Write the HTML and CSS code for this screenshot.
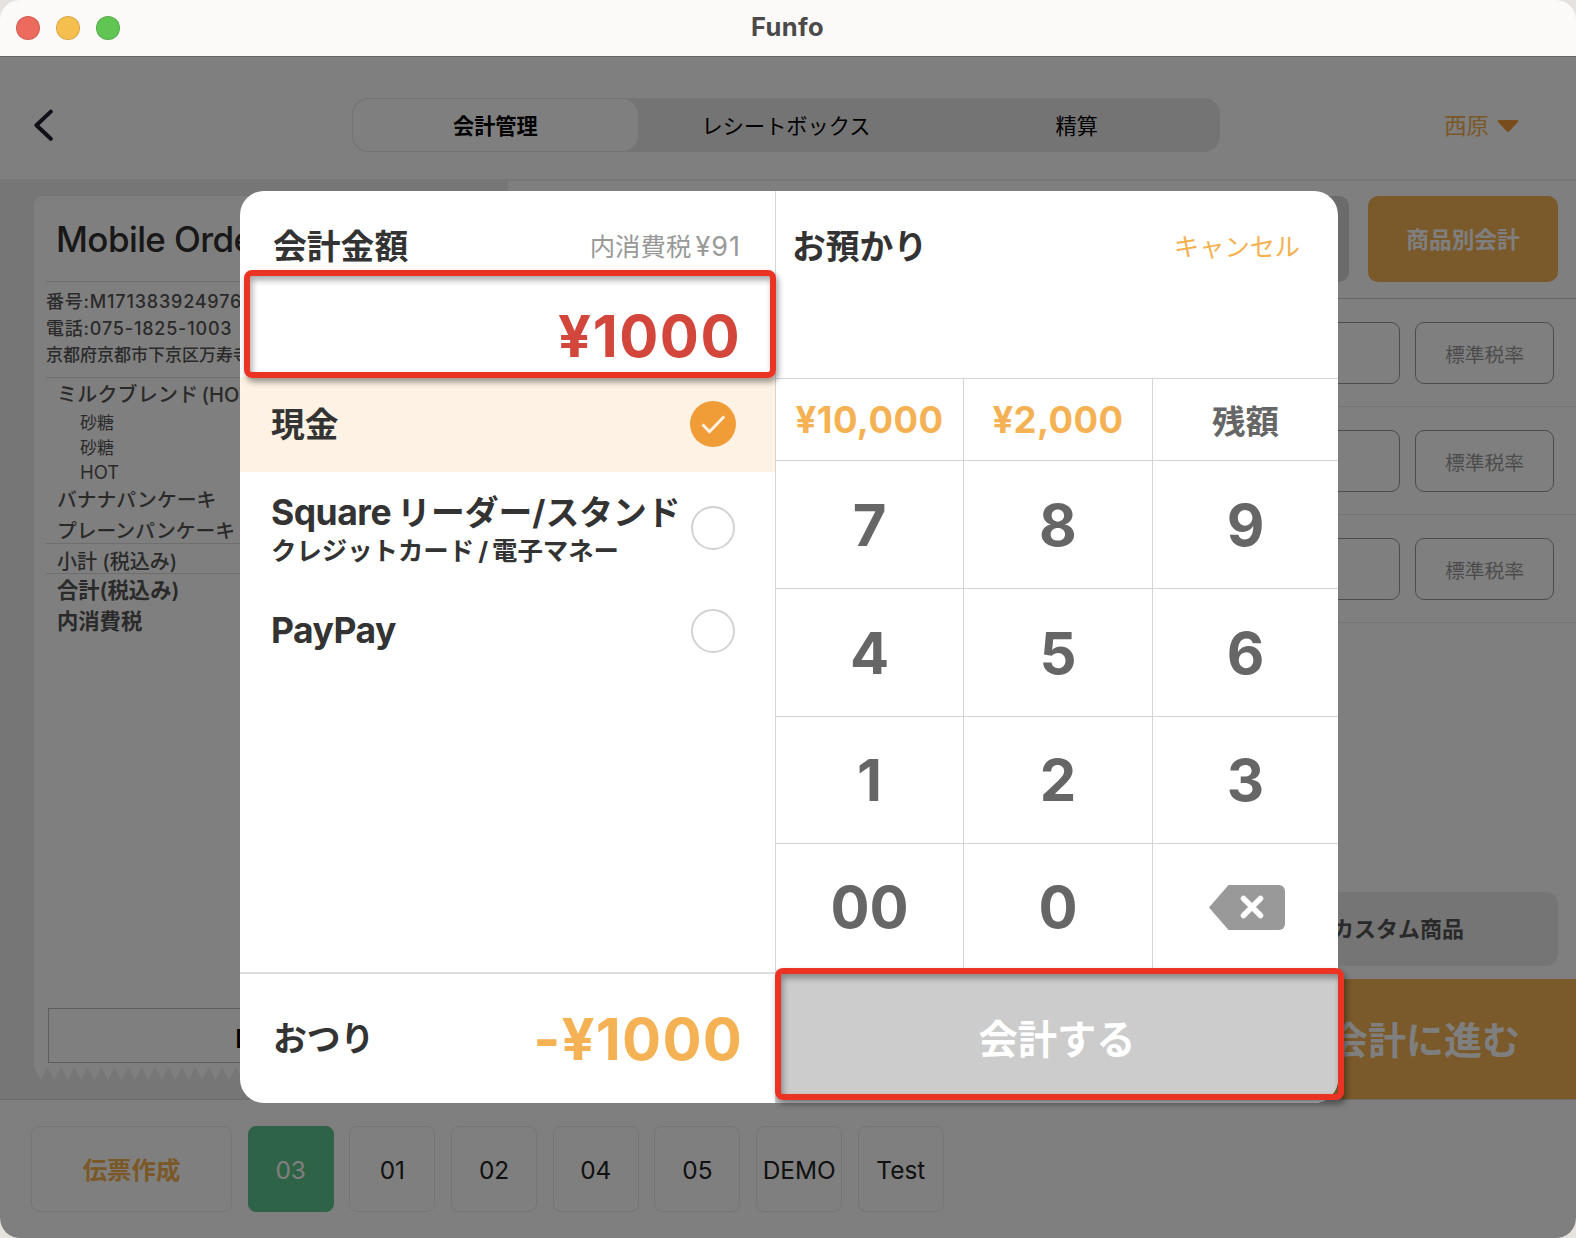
FILE: index.html
```html
<!DOCTYPE html>
<html lang="ja">
<head>
    <meta charset="UTF-8">
    <meta name="viewport" content="width=device-width, initial-scale=1.0">
    <title>Funfo</title>
    <link rel="stylesheet" href="styles.css">
</head>
<body>
    <div class="window">
        <div class="titlebar">
            <div class="lights">
                <span class="light red"></span>
                <span class="light yellow"></span>
                <span class="light green"></span>
            </div>
            <h1>Funfo</h1>
        </div>

        <div class="app">
            <header class="topbar">
                <svg class="back" width="20" height="34" viewBox="0 0 20 34">
                    <path d="M16.800 3.600 2.400 17.200l14.400 13.600" fill="none" stroke="#202030" stroke-width="4" stroke-linecap="round" stroke-linejoin="round"/>
                </svg>
                <nav class="tabs">
                    <a class="tab active">会計管理</a>
                    <a class="tab tab-receipt">レシートボックス</a>
                    <a class="tab">精算</a>
                </nav>
                <div class="user">西原
                    <svg width="22" height="14" viewBox="0 0 22 14"><path d="M2 1h18c1.2 0 1.8 1.2 1 2l-8.700 9.300c-.8.8-1.800.8-2.600 0L1 3C.2 2.200.8 1 2 1z" fill="#f09a37"/></svg>
                </div>
            </header>

            <main class="main">
                <section class="slip">
                    <div class="receipt">
                        <h2>Mobile Order</h2>
                        <div class="shop">
                            <p class="num">番号:M1713839249760</p>
                            <p class="num">電話:075-1825-1003</p>
                            <p>京都府京都市下京区万寿寺町</p>
                        </div>
                        <div class="items">
                            <p class="item first">ミルクブレンド (HOT)</p>
                            <p class="option">砂糖</p>
                            <p class="option">砂糖</p>
                            <p class="option hot">HOT</p>
                            <p class="item">バナナパンケーキ</p>
                            <p class="item">プレーンパンケーキ</p>
                        </div>
                        <p class="subtotal">小計 (税込み)</p>
                        <p class="total">合計(税込み)</p>
                        <p class="total">内消費税</p>
                        <div class="print">D</div>
                    </div>
                    <svg class="teeth" width="440" height="14">
                        <defs>
                            <pattern id="tooth" width="13.45" height="14" patternUnits="userSpaceOnUse">
                                <path d="M0 0h13.45L6.700 13z" fill="#fff"/>
                            </pattern>
                        </defs>
                        <rect width="440" height="14" fill="url(#tooth)"/>
                    </svg>
                </section>

                <section class="detail">
                    <div class="actions">
                        <span class="btn btn-gray"></span>
                        <span class="btn btn-orange">商品別会計</span>
                    </div>
                    <div class="line">
                        <span class="field"></span>
                        <span class="field tax">標準税率</span>
                    </div>
                    <div class="line">
                        <span class="field"></span>
                        <span class="field tax">標準税率</span>
                    </div>
                    <div class="line">
                        <span class="field"></span>
                        <span class="field tax">標準税率</span>
                    </div>
                    <div class="custom">カスタム商品</div>
                    <div class="proceed">会計に進む</div>
                </section>
            </main>

            <footer class="tables">
                <span class="table create">伝票作成</span>
                <span class="table current">03</span>
                <span class="table">01</span>
                <span class="table">02</span>
                <span class="table">04</span>
                <span class="table">05</span>
                <span class="table">DEMO</span>
                <span class="table">Test</span>
            </footer>

            <div class="overlay"></div>
        </div>

        <div class="modal">
            <div class="pay">
                <div class="head">
                    <h3>会計金額</h3>
                    <span class="tax-note">内消費税 <span class="yen">¥91</span></span>
                </div>
                <div class="amount">¥1000</div>
                <div class="method selected">
                    <div class="name">現金</div>
                    <svg width="46" height="46" viewBox="0 0 46 46">
                        <circle cx="23" cy="23" r="23" fill="#f19d37"/>
                        <path d="M12.500 23.500l7 7.200L34.200 15.500" fill="none" stroke="#fdf2e3" stroke-width="3"/>
                    </svg>
                </div>
                <div class="method square">
                    <div class="name"><span class="latin">Square</span> リーダー/スタンド
                        <small>クレジットカード<span class="slash">/</span>電子マネー</small>
                    </div>
                    <span class="radio"></span>
                </div>
                <div class="method">
                    <div class="name latin">PayPay</div>
                    <span class="radio"></span>
                </div>
                <div class="change">
                    <h3>おつり</h3>
                    <span class="change-amount">-¥1000</span>
                </div>
            </div>

            <div class="keypad">
                <div class="head">
                    <h3>お預かり</h3>
                    <a class="cancel">キャンセル</a>
                </div>
                <div class="keys">
                    <span class="key quick">¥10,000</span>
                    <span class="key quick">¥2,000</span>
                    <span class="key rest">残額</span>
                    <span class="key">7</span>
                    <span class="key">8</span>
                    <span class="key">9</span>
                    <span class="key">4</span>
                    <span class="key">5</span>
                    <span class="key">6</span>
                    <span class="key">1</span>
                    <span class="key">2</span>
                    <span class="key">3</span>
                    <span class="key">00</span>
                    <span class="key">0</span>
                    <span class="key delete">
                        <svg width="76" height="45" viewBox="0 0 76 45">
                            <path d="M19.500 0H70a6 6 0 0 1 6 6v33a6 6 0 0 1-6 6H19.500L0 22.500z" fill="#999"/>
                            <path d="M34.500 13.500l17 17m0-17l-17 17" stroke="#fff" stroke-width="5.500" stroke-linecap="round"/>
                        </svg>
                    </span>
                </div>
                <div class="confirm">会計する</div>
            </div>
        </div>

        <!-- highlighted areas -->
        <div class="mark mark-amount"></div>
        <div class="mark mark-confirm"></div>
    </div>
</body>
</html>
```

FILE: styles.css
```css
* {
    box-sizing: border-box;
}
body {
    margin: 0;
    background: #e6e2de;
    font-family: Inter, "Noto Sans CJK JP", sans-serif;
    color: #333;
}
h1, h2, h3, p {
    margin: 0;
}
.window {
    position: relative;
    width: 1576px;
    height: 1238px;
    display: flex;
    flex-direction: column;
    border-radius: 20px;
    overflow: hidden;
}

/* title bar */
.titlebar {
    height: 57px;
    padding: 0 16px;
    display: flex;
    align-items: center;
    background: #fcfaf9;
    border-bottom: 1px solid #686466;
}
.lights {
    display: flex;
    gap: 16px;
    width: 200px;
}
.light {
    width: 24px;
    height: 24px;
    border-radius: 50%;
    border: 1px solid rgba(0, 0, 0, 0.12);
}
.red {
    background: #ed6a5e;
}
.yellow {
    background: #f5bf4f;
}
.green {
    background: #61c554;
}
.titlebar h1 {
    flex: 1;
    padding-right: 201px;
    text-align: center;
    font-size: 25.500px;
    letter-spacing: 0.4px;
    line-height: 54px;
    height: 56px;
    font-weight: 700;
    color: #4b494a;
}

/* app behind the dialog */
.app {
    position: relative;
    flex: 1;
    display: flex;
    flex-direction: column;
    background: #fff;
}
.overlay {
    position: absolute;
    inset: 0;
    background: rgba(0, 0, 0, 0.5);
}
.topbar {
    height: 124px;
    padding: 41px 57px 0 34px;
    display: flex;
    align-items: flex-start;
    border-bottom: 2px solid #eee;
}
.back {
    margin-top: 10px;
}
.tabs {
    margin-left: 298px;
    width: 868px;
    height: 54px;
    padding: 1px;
    display: flex;
    background: #e9e9e9;
    border-radius: 16px;
}
.tab {
    width: 285px;
    line-height: 55px;
    text-align: center;
    font-size: 21.200px;
    color: #000;
}
.tab-receipt {
    width: 297px;
}
.tab.active {
    height: 52px;
    background: #fff;
    border-radius: 16px;
    font-weight: 700;
}
.user {
    margin-left: auto;
    display: flex;
    align-items: center;
    gap: 8px;
    line-height: 56px;
    font-size: 22.400px;
    color: #f5b04f;
}
.main {
    height: 918px;
    display: flex;
}
.slip {
    width: 508px;
    padding: 15px 34px 0;
    background: #ededed;
}
.receipt {
    width: 440px;
    height: 871px;
    padding: 0 12px 4px;
    display: flex;
    flex-direction: column;
    background: #fff;
    border-radius: 9px 9px 0 0;
    white-space: nowrap;
    overflow: hidden;
    font-weight: 500;
    color: #555;
}
.receipt h2 {
    height: 85px;
    padding-left: 10px;
    font-size: 35px;
    line-height: 86px;
    font-weight: 550;
    letter-spacing: -0.6px;
    color: #303030;
}
.shop {
    padding: 6px 0 8px;
    border-top: 1px solid #ddd;
    border-bottom: 1px solid #ddd;
    font-size: 17px;
    line-height: 27px;
}
.num {
    font-size: 18px;
    letter-spacing: 0.8px;
}
.items {
    padding-top: 1px;
}
.item {
    padding-left: 11px;
    font-size: 19.800px;
    line-height: 31px;
}
.item.first {
    line-height: 32px;
    font-size: 20px;
    letter-spacing: 0.2px;
    word-spacing: -2.500px;
}
.option {
    padding-left: 34px;
    font-size: 17px;
    line-height: 24.500px;
    font-weight: 400;
}
.hot {
    font-size: 18.500px;
}
.subtotal {
    height: 31px;
    margin-top: -4px;
    padding: 4px 0 0 11px;
    border-top: 1px solid #ddd;
    border-bottom: 1px solid #ddd;
    font-size: 20px;
    line-height: 28px;
}
.total {
    padding-left: 11px;
    font-size: 21.300px;
    line-height: 32px;
    font-weight: 600;
}
.total + .total {
    line-height: 31px;
}
.print {
    margin: auto 0 0 2px;
    width: 426px;
    height: 55px;
    padding-left: 186px;
    line-height: 60px;
    border: 1px solid #bbb;
    font-size: 26px;
    color: #000;
}
.teeth {
    display: block;
}
.detail {
    flex: 1;
    display: flex;
    flex-direction: column;
}
.actions {
    display: flex;
    justify-content: flex-end;
    gap: 19px;
    height: 118px;
    padding: 15px 18px 0 0;
    border-bottom: 1px solid #ccc;
}
.btn {
    width: 190px;
    height: 86px;
    border-radius: 10px;
    line-height: 87px;
    text-align: center;
    font-size: 22.700px;
    font-weight: 700;
    color: #fff;
}
.btn-gray {
    background: #d6d6d6;
}
.btn-orange {
    background: #f5b254;
}
.line {
    display: flex;
    justify-content: flex-end;
    gap: 15px;
    height: 108px;
    padding: 23px 22px 0 0;
    border-bottom: 1px solid #e8e8e8;
}
.field {
    width: 139px;
    height: 62px;
    line-height: 64px;
    border: 1px solid #999;
    border-radius: 9px;
    text-align: center;
    font-size: 19.800px;
    color: #999;
}
.custom {
    height: 74px;
    margin: auto 18px 13px 0;
    padding-right: 94px;
    border-radius: 12px;
    background: #eaeaea;
    text-align: right;
    line-height: 74px;
    font-size: 22px;
    font-weight: 700;
    color: #555;
}
.proceed {
    height: 120px;
    padding-right: 56px;
    background: #f5b254;
    text-align: right;
    line-height: 123px;
    font-size: 38px;
    font-weight: 700;
    color: #fff;
}
.tables {
    flex: 1;
    display: flex;
    gap: 15.700px;
    padding: 26px 31px 0;
    border-top: 1px solid #d8d8d8;
    background: #fff;
}
.table {
    width: 86px;
    height: 86px;
    line-height: 86px;
    border: 1px solid #ebebeb;
    border-radius: 8px;
    display: flex;
    justify-content: center;
    font-size: 24.400px;
    color: #222;
}
.create {
    width: 201px;
    color: #f5b04f;
    font-weight: 700;
}
.current {
    background: #5ec68e;
    border-color: #5ec68e;
    color: #fff;
}

/* checkout dialog */
.modal {
    position: absolute;
    left: 240px;
    top: 191px;
    width: 1098px;
    height: 912px;
    display: flex;
    background: #fff;
    border-radius: 24px;
    overflow: hidden;
}
.modal h3 {
    font-size: 33.800px;
    font-weight: 700;
}
.pay {
    width: 535px;
    display: flex;
    flex-direction: column;
}
.head {
    display: flex;
    justify-content: space-between;
    line-height: 40px;
    padding: 36px 35px 0 33px;
}
.tax-note {
    font-size: 25.400px;
    color: #999;
    white-space: nowrap;
    word-spacing: -3px;
}
.yen {
    font-size: 27px;
    letter-spacing: 1px;
    margin-right: -1px;
}
.amount {
    height: 110px;
    padding-right: 34px;
    text-align: right;
    line-height: 139px;
    font-size: 58px;
    font-weight: 700;
    letter-spacing: 1.5px;
    color: #d3463c;
}
.method {
    height: 103px;
    padding: 0 39px 0 31px;
    display: flex;
    align-items: center;
    justify-content: space-between;
}
.method.selected {
    height: 95px;
    background: #fdf2e3;
}
.selected svg {
    margin-bottom: 1px;
}
.method.square {
    margin-top: 4px;
}
.square .name {
    padding-top: 6px;
}
.name {
    font-size: 33.800px;
    line-height: 40px;
    font-weight: 700;
    white-space: nowrap;
}
.name small {
    display: block;
    font-size: 25.400px;
    line-height: 36px;
}
.slash {
    padding: 0 4px;
}
.latin {
    font-size: 35.500px;
    letter-spacing: -0.5px;
}
.square .latin {
    margin-right: -2px;
}
.radio {
    width: 44px;
    height: 44px;
    margin-right: 1px;
    border: 2px solid #d2d2d2;
    border-radius: 50%;
}
.change {
    margin-top: auto;
    height: 131px;
    padding: 0 32px 0 33px;
    display: flex;
    align-items: center;
    justify-content: space-between;
    border-top: 2px solid #ddd;
}
.change h3 {
    padding-bottom: 4px;
}
.change-amount {
    font-size: 58px;
    font-weight: 700;
    letter-spacing: 1.2px;
    font-feature-settings: "calt" 0;
    color: #f5b254;
}
.keypad {
    flex: 1;
    display: flex;
    flex-direction: column;
    border-left: 1px solid #d5d5d5;
}
.keypad .head {
    height: 187px;
    padding: 36px 38px 0 16px;
}
.cancel {
    font-size: 25.200px;
    color: #f5b04f;
}
.keys {
    display: grid;
    grid-template-columns: 188px 189px 185px;
    grid-template-rows: 82px 128px 128px 127px 127px;
}
.key {
    display: flex;
    align-items: center;
    justify-content: center;
    border-top: 1px solid #d5d5d5;
    border-right: 1px solid #d5d5d5;
    font-size: 58px;
    font-weight: 700;
    color: #666;
}
.key:nth-child(3n) {
    border-right: 0;
}
.quick {
    font-size: 36.500px;
    letter-spacing: 0.4px;
    color: #f5b254;
}
.rest {
    font-size: 33.500px;
}
.delete {
    padding-left: 2px;
}
.confirm {
    height: 133px;
    background: #ccc;
    text-align: center;
    line-height: 140px;
    font-size: 39.300px;
    font-weight: 700;
    color: #fff;
}

/* red frames lie over the dialog */
.mark {
    position: absolute;
    border: 6px solid #eb3323;
    border-radius: 8px;
    box-shadow: 2px 4px 6px rgba(0, 0, 0, 0.4), inset 2px 4px 6px rgba(0, 0, 0, 0.35);
}
.mark-amount {
    left: 244px;
    top: 270px;
    width: 532px;
    height: 108px;
}
.mark-confirm {
    left: 775px;
    top: 968px;
    width: 569px;
    height: 132px;
}
```
